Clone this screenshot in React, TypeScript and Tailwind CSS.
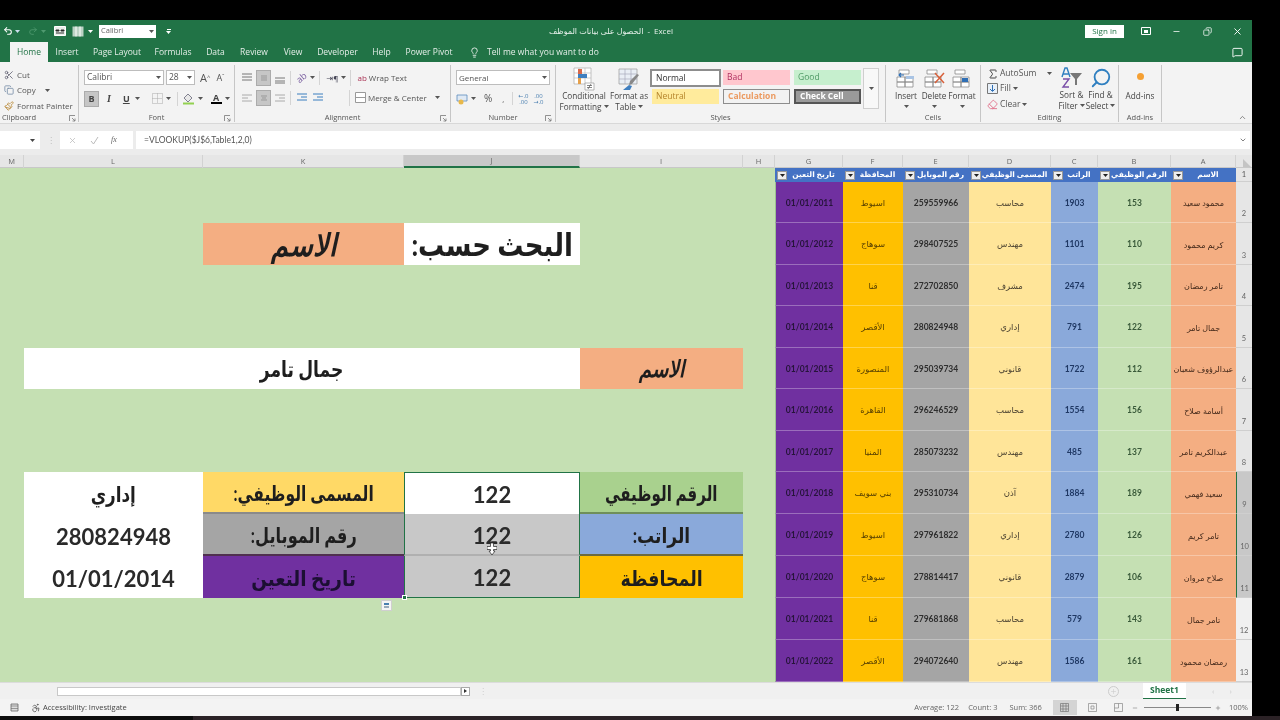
import React from "react";
import { Undo2, Redo2, Scissors, Copy, Paintbrush, Lightbulb, MessageSquare, X, Minus, ChevronUp, ChevronDown, Plus, Sigma, Eraser, Search, Accessibility } from "lucide-react";

const cols = "grid grid-cols-[24px_179px_201px_176px_163px_32px_68px_60px_66px_82px_47px_73px_65px_16px]";

const Caret = ({ c = "#555" }: { c?: string }) => (
  <svg width="5" height="3" viewBox="0 0 5 3" className="shrink-0"><path d="M0 0h5L2.500 3z" fill={c} /></svg>
);

const Launcher = () => (
  <svg width="7" height="7" viewBox="0 0 7 7" className="shrink-0"><path d="M.5 6V.5H6M3 3l3 3M6 3.500V6H3.500" fill="none" stroke="#777" strokeWidth=".8" /></svg>
);

const Lines = ({ ys, x1 = [1, 1, 1], x2 = [11, 11, 11], stroke = "#777" }: { ys: number[]; x1?: number[]; x2?: number[]; stroke?: string }) => (
  <svg width="12" height="12" viewBox="0 0 12 12" className="shrink-0">
    {ys.map((y, i) => <path key={i} d={`M${x1[i]} ${y}H${x2[i]}`} stroke={stroke} strokeWidth="1" />)}
  </svg>
);

const Pressed = ({ children }: { children: React.ReactNode }) => (
  <div className="w-[15px] h-[16px] bg-[#c6c6c6] border border-[#ababab] flex items-center justify-center">{children}</div>
);

const CellsIcon = ({ kind }: { kind: string }) => (
  <svg width="22" height="22" viewBox="0 0 22 22">
    <path d="M4 2h10v4H4zM2 9h8v5H2zM10 9h8v5h-8zM2 14h8v5H2zM10 14h8v5h-8z" fill="#fff" stroke="#8a8a8a" strokeWidth=".8" />
    {kind === "insert" && <path d="M9 7H4m2-2L4 7l2 2" fill="none" stroke="#2f6fb5" strokeWidth="1.200" />}
    {kind === "insert" && <path d="M11 8h8v3h-8z" fill="#a9c4e4" />}
    {kind === "delete" && <path d="M12 5l9 10M21 5l-9 10" stroke="#d8603a" strokeWidth="1.500" />}
    {kind === "format" && <path d="M11 10h6v4h-6z" fill="#2f6fb5" />}
  </svg>
);

const Big = ({ icon, lines, w }: { icon: React.ReactNode; lines: [string, string?]; w: string }) => (
  <div className={`${w} flex flex-col items-center shrink-0`}>
    <div className="h-[23px] flex items-center justify-center">{icon}</div>
    <div className="text-[8.200px] leading-[11px] text-[#444] whitespace-nowrap">{lines[0]}</div>
    <div className="text-[8.200px] leading-[11px] text-[#444] whitespace-nowrap flex items-center justify-center gap-[2px] h-[11px]">{lines[1]}<Caret /></div>
  </div>
);

const Group = ({ w, label, launcher, left, children }: { w: string; label: string; launcher?: boolean; left?: boolean; children: React.ReactNode }) => (
  <div className={`${w} shrink-0 flex flex-col border-r border-[#c6c6c6] mt-[3px] mb-px`}>
    <div className="h-[48px] flex shrink-0">{children}</div>
    <div className={`h-[10px] flex items-center px-[2px] text-[7.500px] text-[#555] ${left ? "justify-between" : "justify-center relative"}`}>
      <span>{label}</span>
      {launcher && <span className={left ? "" : "absolute right-[3px] top-[2px]"}><Launcher /></span>}
    </div>
  </div>
);

const tabs: [string, string][] = [
  ["Insert", "w-[38px]"], ["Page Layout", "w-[62px]"], ["Formulas", "w-[50px]"], ["Data", "w-[35px]"], ["Review", "w-[42px]"],
  ["View", "w-[36px]"], ["Developer", "w-[53px]"], ["Help", "w-[35px]"], ["Power Pivot", "w-[60px]"],
];

const styleBox = "h-[15px] flex items-center pl-[4px] text-[8.500px]";

const Ribbon = () => (
  <div className="h-[62px] bg-[#f3f3f3] flex shrink-0 border-b border-[#d8d8d8] text-[#444]">
    <Group w="w-[79px]" label="Clipboard" launcher left>
      <div className="flex flex-col pl-[4px] pt-[2px] text-[8px] text-[#555]">
        <div className="h-[15px] flex items-center gap-[3px]"><Scissors size={10} color="#667" />Cut</div>
        <div className="h-[16px] flex items-center gap-[3px]"><Copy size={10} color="#7a8fa8" />Copy<span className="ml-[6px]"><Caret /></span></div>
        <div className="h-[15px] flex items-center gap-[3px]"><Paintbrush size={10} color="#b98a3a" />Format Painter</div>
      </div>
    </Group>
    <Group w="w-[156px]" label="Font" launcher>
      <div className="flex flex-col pl-[5px] pt-[5px]">
        <div className="flex items-center h-[15px]">
          <div className="w-[80px] h-[15px] bg-white border border-[#bdbdbd] flex items-center justify-between px-[2px] text-[8.500px] text-[#555]">Calibri<Caret /></div>
          <div className="w-[29px] h-[15px] ml-[2px] bg-white border border-[#bdbdbd] flex items-center justify-between px-[2px] text-[8.500px] text-[#555]">28<Caret /></div>
          <span className="ml-[5px] text-[11px] text-[#555] leading-none">A<sup className="text-[6px]">^</sup></span>
          <span className="ml-[6px] text-[9px] text-[#555] leading-none">A<sup className="text-[6px]">ˇ</sup></span>
        </div>
        <div className="flex items-center h-[17px] mt-[5px] text-[9px] text-[#444]">
          <Pressed><b className="text-[9px]">B</b></Pressed>
          <i className="ml-[8px] font-['Liberation_Serif',serif] font-bold text-[10px]">I</i>
          <u className="ml-[12px] font-bold text-[9px]">U</u>
          <span className="ml-[5px]"><Caret /></span>
          <svg width="11" height="11" viewBox="0 0 11 11" className="ml-[12px]"><path d="M.5.500h10v10H.5zM5.500.5v10M.5 5.500h10" fill="none" stroke="#aaa" strokeDasharray="1 1" /></svg>
          <span className="ml-[3px]"><Caret /></span>
          <div className="w-px h-[14px] bg-[#d4d4d4] ml-[6px]" />
          <svg width="13" height="13" viewBox="0 0 13 13" className="ml-[4px]"><path d="M2 6l4-4 4 4-4 4z" fill="#e8e8e8" stroke="#667" strokeWidth=".8" /><path d="M1 11.500h11" stroke="#92d050" strokeWidth="2" /></svg>
          <span className="ml-[3px]"><Caret /></span>
          <span className="ml-[8px] flex flex-col items-center leading-[9px] font-bold text-[9px]">A<span className="w-[11px] h-[2px] bg-black" /></span>
          <span className="ml-[3px]"><Caret /></span>
        </div>
      </div>
    </Group>
    <Group w="w-[216px]" label="Alignment" launcher>
      <div className="flex flex-col pl-[6px] pt-[4px]">
        <div className="flex items-center h-[17px]">
          <Lines ys={[2, 5, 8]} />
          <div className="ml-[3px]"><Pressed><Lines ys={[4, 6, 8]} x1={[3, 3, 3]} x2={[9, 9, 9]} stroke="#999" /></Pressed></div>
          <div className="ml-[3px]"><Lines ys={[6, 9, 11]} /></div>
          <div className="w-px h-[14px] bg-[#d4d4d4] ml-[4px]" />
          <span className="ml-[5px] text-[9px] text-[#7a5fa0] rotate-[-40deg] leading-none">ab</span>
          <span className="ml-[3px]"><Caret /></span>
          <div className="w-px h-[14px] bg-[#d4d4d4] ml-[4px]" />
          <span className="ml-[7px] text-[8px] text-[#445]">⇥¶</span>
          <span className="ml-[3px]"><Caret /></span>
          <div className="w-px h-[16px] bg-[#d4d4d4] ml-[4px]" />
          <span className="ml-[6px] text-[8px] text-[#a35]">ab</span>
          <span className="ml-[2px] text-[8px] text-[#555]">Wrap Text</span>
        </div>
        <div className="flex items-center h-[17px] mt-[3px]">
          <Lines ys={[3, 6, 9]} x2={[11, 7, 11]} stroke="#aaa" />
          <div className="ml-[3px]"><Pressed><Lines ys={[4, 6, 8]} x1={[3, 4, 3]} x2={[9, 8, 9]} stroke="#999" /></Pressed></div>
          <div className="ml-[3px]"><Lines ys={[3, 6, 9]} x1={[1, 5, 1]} stroke="#aaa" /></div>
          <div className="w-px h-[14px] bg-[#d4d4d4] ml-[4px]" />
          <div className="ml-[5px]"><Lines ys={[2, 5, 8]} x1={[1, 5, 1]} stroke="#3a7fbf" /></div>
          <div className="ml-[4px]"><Lines ys={[2, 5, 8]} x1={[1, 5, 1]} stroke="#3a7fbf" /></div>
          <div className="w-px h-[16px] bg-[#d4d4d4] ml-[25px]" />
          <svg width="11" height="11" viewBox="0 0 11 11" className="ml-[5px]"><path d="M.5.500h10v10H.5zM.5 5.500h10" fill="#fff" stroke="#999" /></svg>
          <span className="ml-[2px] text-[8px] text-[#555] whitespace-nowrap">Merge &amp; Center</span>
          <span className="ml-[8px]"><Caret /></span>
        </div>
      </div>
    </Group>
    <Group w="w-[105px]" label="Number" launcher>
      <div className="flex flex-col pl-[5px] pt-[5px]">
        <div className="w-[94px] h-[15px] bg-white border border-[#bdbdbd] flex items-center justify-between px-[2px] text-[8px] text-[#555]">General<Caret /></div>
        <div className="flex items-center h-[17px] mt-[5px] text-[10px] text-[#555]">
          <svg width="12" height="12" viewBox="0 0 12 12"><path d="M1 2h10v6H1z" fill="#dfe9f4" stroke="#5b8bbd" strokeWidth=".8" /><circle cx="5" cy="9" r="2.500" fill="#e8b84a" /></svg>
          <span className="ml-[3px]"><Caret /></span>
          <span className="ml-[8px]">%</span>
          <span className="ml-[10px] text-[8px]">,</span>
          <div className="w-px h-[13px] bg-[#d4d4d4] ml-[8px]" />
          <span className="ml-[5px] text-[6px] leading-[6px] text-center text-[#4a7fb0]">←.0<br />.00</span>
          <span className="ml-[5px] text-[6px] leading-[6px] text-center text-[#4a7fb0]">.00<br />→.0</span>
        </div>
      </div>
    </Group>
    <Group w="w-[330px]" label="Styles">
      <div className="flex pl-[3px] pt-[2px]">
        <Big w="w-[50px]" lines={["Conditional", "Formatting"]} icon={
          <svg width="24" height="24" viewBox="0 0 24 24"><path d="M2 1h17v16H2z" fill="#fff" stroke="#aaa" strokeWidth=".7" /><path d="M2 6h17M2 11h17M7 1v16M13 1v16" stroke="#bbb" strokeWidth=".7" /><path d="M6 2h4v5H6z" fill="#d9694a" /><path d="M6 7h9v4H6z" fill="#3f7fc0" /><path d="M6 11h3v6H6z" fill="#e6a04a" /><path d="M13 16h9v7h-9z" fill="#fff" stroke="#999" strokeWidth=".7" /><path d="M15 18.500h5M15 20.500h5M19 17l-3 5" stroke="#555" strokeWidth=".7" /></svg>
        } />
        <Big w="w-[40px]" lines={["Format as", "Table"]} icon={
          <svg width="24" height="24" viewBox="0 0 24 24"><path d="M2 2h18v15H2z" fill="#e9eef5" stroke="#999" strokeWidth=".7" /><path d="M2 7h18M2 12h18M8 2v15M14 2v15" stroke="#aab" strokeWidth=".7" /><path d="M22 8l-7 9-3 1 1-4 7-7z" fill="#888" /><path d="M6 23l6-5 3 1-2 4z" fill="#3f7fc0" /></svg>
        } />
        <div className="flex flex-col gap-[3px] pt-[2px] ml-px">
          <div className="flex gap-[2px] h-[17px]">
            <div className={`w-[71px] ${styleBox} !h-[18px] bg-white border-2 border-[#8d8d8d] text-[#333]`}>Normal</div>
            <div className={`w-[67px] ${styleBox} mt-px bg-[#ffc7ce] text-[#b03060]`}>Bad</div>
            <div className={`w-[67px] ${styleBox} mt-px ml-[2px] bg-[#c6efce] text-[#4f9a65]`}>Good</div>
          </div>
          <div className="flex gap-[2px]">
            <div className={`w-[67px] ${styleBox} ml-[2px] bg-[#ffeb9c] text-[#b5842a]`}>Neutral</div>
            <div className={`w-[67px] ${styleBox} ml-[2px] bg-[#f2f2f2] border border-[#8d8d8d] text-[#eb9a60] font-bold`}>Calculation</div>
            <div className={`w-[67px] ${styleBox} ml-[2px] bg-[#9a9a9a] border-2 border-[#555] text-white font-bold`}>Check Cell</div>
          </div>
        </div>
        <div className="w-[16px] h-[41px] ml-[2px] mt-[1px] bg-[#f8f8f8] border border-[#cfcfcf] flex items-center justify-center"><Caret /></div>
      </div>
    </Group>
    <Group w="w-[95px]" label="Cells">
      <div className="flex pl-[6px] pt-[2px]">
        <Big w="w-[28px]" lines={["Insert", ""]} icon={<CellsIcon kind="insert" />} />
        <Big w="w-[28px]" lines={["Delete", ""]} icon={<CellsIcon kind="delete" />} />
        <Big w="w-[28px]" lines={["Format", ""]} icon={<CellsIcon kind="format" />} />
      </div>
    </Group>
    <Group w="w-[138px]" label="Editing">
      <div className="flex pl-[6px] pt-[1px]">
        <div className="flex flex-col text-[8.500px] text-[#555] w-[70px]">
          <div className="h-[15px] flex items-center gap-[1px]"><Sigma size={12} color="#444" />AutoSum<span className="ml-[10px]"><Caret /></span></div>
          <div className="h-[15px] flex items-center gap-[2px]"><svg width="11" height="11" viewBox="0 0 11 11"><path d="M.5.500h10v10H.5z" fill="#e8f0f8" stroke="#777" /><path d="M5.500 2v6M3 6l2.500 2.500L8 6" fill="none" stroke="#2f6fb5" /></svg>Fill<Caret /></div>
          <div className="h-[16px] flex items-center gap-[2px]"><Eraser size={11} color="#e0708a" />Clear<Caret /></div>
        </div>
        <Big w="w-[29px]" lines={["Sort &", "Filter"]} icon={
          <svg width="24" height="24" viewBox="0 0 24 24"><path d="M2 11l3-9h2l3 9M3.500 8h5" fill="none" stroke="#2f7fc0" strokeWidth="1.400" /><path d="M3 13h6l-6 8h6" fill="none" stroke="#7a4fa8" strokeWidth="1.400" /><path d="M10 7h12l-5 6v6h-2v-6z" fill="#777" /></svg>
        } />
        <Big w="w-[29px]" lines={["Find &", "Select"]} icon={<Search size={22} color="#2f7fc0" strokeWidth={2} className="-scale-x-100" />} />
      </div>
    </Group>
    <Group w="w-[43px]" label="Add-ins">
      <div className="flex flex-col items-center w-full text-[8.200px] text-[#444]">
        <div className="h-[23px] flex items-center"><span className="w-[7px] h-[7px] rounded-full bg-[#f5a033]" /></div>
        <span className="mt-[2px] leading-[11px]">Add-ins</span>
      </div>
    </Group>
    <div className="flex-1 flex items-end justify-end pr-[5px] pb-[1px]"><ChevronUp size={9} color="#666" /></div>
  </div>
);

const Filter = () => (
  <span className="w-[10px] h-[9px] bg-[#eeeeee] border border-[#999] flex items-center justify-center shrink-0"><Caret c="#222" /></span>
);

const headers = ["تاريخ التعين", "المحافظة", "رقم الموبايل", "المسمى الوظيفي", "الراتب", "الرقم الوظيفي", "الاسم"];

const rowsData: string[][] = [
  ["محمود سعيد", "153", "1903", "محاسب", "259559966", "اسيوط", "01/01/2011"],
  ["كريم محمود", "110", "1101", "مهندس", "298407525", "سوهاج", "01/01/2012"],
  ["تامر رمضان", "195", "2474", "مشرف", "272702850", "قنا", "01/01/2013"],
  ["جمال تامر", "122", "791", "إداري", "280824948", "الأقصر", "01/01/2014"],
  ["عبدالرؤوف شعبان", "112", "1722", "قانوني", "295039734", "المنصورة", "01/01/2015"],
  ["أسامة صلاح", "156", "1554", "محاسب", "296246529", "القاهرة", "01/01/2016"],
  ["عبدالكريم تامر", "137", "485", "مهندس", "285073232", "المنيا", "01/01/2017"],
  ["سعيد فهمي", "189", "1884", "آذن", "295310734", "بني سويف", "01/01/2018"],
  ["تامر كريم", "126", "2780", "إداري", "297961822", "اسيوط", "01/01/2019"],
  ["صلاح مروان", "106", "2879", "قانوني", "278814417", "سوهاج", "01/01/2020"],
  ["تامر جمال", "143", "579", "محاسب", "279681868", "قنا", "01/01/2021"],
  ["رمضان محمود", "161", "1586", "مهندس", "294072640", "الأقصر", "01/01/2022"],
];

const rowHeights = ["h-[41px]", "h-[42px]", "h-[41px]", "h-[42px]", "h-[41px]", "h-[42px]", "h-[41px]", "h-[42px]", "h-[42px]", "h-[42px]", "h-[42px]", "h-[42px]"];

const big = "flex items-center justify-center text-[#1e1e1e] font-bold";
const num = `${big} text-[22px] text-[#2a2a2a] pt-[2px]`;

const Ar = ({ text, cls }: { text: string; cls: string }) => (
  <span dir="rtl" className={`inline-block whitespace-nowrap leading-none ${cls}`}>{text}</span>
);

const LeftCells = ({ row }: { row: number }) => {
  if (row === 3)
    return (
      <>
        <div className="col-span-2" />
        <div className={`${big} bg-[#f4ae82]`}><Ar text="الاسم" cls="text-[31px] scale-x-[.88] italic" /></div>
        <div className={`${big} bg-white`}><Ar text="البحث حسب:" cls="text-[31px] scale-x-[.84]" /></div>
        <div className="col-span-2" />
      </>
    );
  if (row === 6)
    return (
      <>
        <div />
        <div className={`${big} col-span-3 bg-white`}><Ar text="جمال تامر" cls="text-[22px] scale-x-[.78]" /></div>
        <div className={`${big} bg-[#f4ae82]`}><Ar text="الاسم" cls="text-[23px] scale-x-[.85] italic" /></div>
        <div />
      </>
    );
  if (row === 9)
    return (
      <>
        <div />
        <div className={`${big} bg-white`}><Ar text="إداري" cls="text-[21px] scale-x-[.8]" /></div>
        <div className={`${big} bg-[#ffd966] border-b-2 border-[#8a8a8a]`}><Ar text="المسمى الوظيفي:" cls="text-[21px] scale-x-[.74]" /></div>
        <div className={`${num} bg-white border-x border-t border-[#217346]`}>122</div>
        <div className={`${big} bg-[#a9d18e] border-b-2 border-[#6f8f5a]`}><Ar text="الرقم الوظيفي" cls="text-[21px] scale-x-[.72]" /></div>
        <div />
      </>
    );
  if (row === 10)
    return (
      <>
        <div />
        <div className={`${num} bg-white`}>280824948</div>
        <div className={`${big} bg-[#a5a5a5] border-b-2 border-[#50304f]`}><Ar text="رقم الموبايل:" cls="text-[21px] scale-x-[.77]" /></div>
        <div className={`${num} bg-[#c8c8c8] border-x border-[#217346] border-b-2 border-b-[#b0b0b0] relative`}>
          122
          <svg width="10" height="12" viewBox="0 0 10 12" className="absolute left-[82px] top-[29px]"><path d="M3.500 0h3v3.500H10v3H6.500V8L8 8 5 12 2 8h1.500V6.500H0v-3h3.500z" fill="#fff" stroke="#222" strokeWidth=".7" /></svg>
        </div>
        <div className={`${big} bg-[#8aa9da] border-b-2 border-[#6c6a40]`}><Ar text="الراتب:" cls="text-[21px] scale-x-[.81]" /></div>
        <div />
      </>
    );
  if (row === 11)
    return (
      <>
        <div />
        <div className={`${num} bg-white`}>01/01/2014</div>
        <div className={`${big} bg-[#7030a0] !text-[#1c0f33]`}><Ar text="تاريخ التعين" cls="text-[21px] scale-x-[.88]" /></div>
        <div className={`${num} bg-[#c8c8c8] border-x border-b border-[#217346] relative`}>
          122
          <span className="absolute -left-[3px] -bottom-[3px] w-[5px] h-[5px] bg-[#217346] border border-white" />
        </div>
        <div className={`${big} bg-[#ffc000]`}><Ar text="المحافظة" cls="text-[21px] scale-x-[.83]" /></div>
        <div />
      </>
    );
  return <div className="col-span-6" />;
};

const dataCell = "flex items-center justify-center text-[8.500px] text-[#333] border-b border-white/30 whitespace-nowrap pt-[2px]";

const Sheet = () => (
  <div className="h-[514px] bg-[#c5e0b3] relative shrink-0 font-['Lato','DejaVu_Sans',sans-serif] overflow-hidden">
    <div className={`${cols} h-[14px]`}>
      <div className="col-span-6" />
      {headers.map((h) => (
        <div key={h} className="bg-[#4472c4] flex items-center justify-between pl-[2px] pr-[3px] text-[7.500px] font-bold text-white whitespace-nowrap">
          <Filter />
          <span className="flex-1 text-center">{h}</span>
        </div>
      ))}
      <div className="bg-[#e6e6e6] flex items-center justify-center text-[7.500px] text-[#555] border-b border-[#cfcfcf]">1</div>
    </div>
    {rowsData.map((r, i) => {
      const row = i + 2;
      const sel = row >= 9 && row <= 11;
      return (
        <div key={row} className={`${cols} ${rowHeights[i]}`}>
          <LeftCells row={row} />
          <div className={`${dataCell} bg-[#7030a0] !text-[#26143a] font-bold border-l border-l-[#9bc28f]`}>{r[6]}</div>
          <div className={`${dataCell} bg-[#ffc000] !text-[#5a4200]`}>{r[5]}</div>
          <div className={`${dataCell} bg-[#a5a5a5] font-bold !text-[#2e2e2e]`}>{r[4]}</div>
          <div className={`${dataCell} bg-[#ffe599] !text-[#4a4130]`}>{r[3]}</div>
          <div className={`${dataCell} bg-[#8aa9da] font-bold !text-[#1f3864]`}>{r[2]}</div>
          <div className={`${dataCell} bg-[#c5e0b3] font-bold !text-[#3a5a3a]`}>{r[1]}</div>
          <div className={`${dataCell} bg-[#f4ae82] !text-[#43291a] !text-[8px]`}>{r[0]}</div>
          <div className={`flex items-end justify-center pb-[3px] text-[7.500px] text-[#666] border-b border-[#cfcfcf] ${sel ? "bg-[#c8c8c8] border-l border-l-[#217346]" : row >= 12 ? "bg-[#f0f0f0]" : "bg-[#e6e6e6]"}`}>{row}</div>
        </div>
      );
    })}
    <div className="absolute left-[381px] top-[432px] w-[11px] h-[11px] bg-[#f4f4f4] border border-[#cfcfcf] flex flex-col items-center justify-center gap-px">
      <span className="w-[5px] h-[2px] bg-[#4a7fb0]" />
      <span className="w-[5px] h-[2px] bg-[#9ab]" />
    </div>
  </div>
);

const letters = ["M", "L", "K", "J", "I", "H", "G", "F", "E", "D", "C", "B", "A"];

export default function App() {
  return (
    <div className="w-[1280px] h-[720px] bg-black overflow-hidden flex flex-col pt-[20px] font-['Open_Sans','DejaVu_Sans',sans-serif] blur-[0.4px]">
      <div className="w-[1252px] flex flex-col">
        {/* Title bar */}
        <div className="h-[22px] bg-[#217346] flex items-center text-white shrink-0">
          <div className="w-[549px] shrink-0 flex items-center">
            <Undo2 size={10} strokeWidth={2.500} className="ml-[3px]" />
            <span className="ml-[2px]"><Caret c="#cde" /></span>
            <Redo2 size={10} color="#4f9a70" className="ml-[8px]" />
            <span className="ml-[3px]"><Caret c="#4f9a70" /></span>
            <svg width="12" height="10" viewBox="0 0 12 10" className="ml-[8px]"><path d="M.5.500h11v9H.5z" fill="#e8eeea" stroke="#fff" /><path d="M2 4h3v1H2zM7 4h3v1H7zM2 7h8" stroke="#333" /></svg>
            <svg width="12" height="11" viewBox="0 0 12 11" className="ml-[6px]"><path d="M.5.500h11v10H.5z" fill="#bcd3c5" /><path d="M4 .5v10M8 .5v10" stroke="#fff" /></svg>
            <span className="ml-[4px]"><Caret c="#fff" /></span>
            <div className="w-[57px] h-[13px] ml-[6px] bg-white flex items-center justify-between px-[2px] text-[7.500px] text-[#666]">Calibri<Caret /></div>
            <span className="ml-[10px] flex flex-col items-center gap-px"><span className="w-[4px] h-px bg-white" /><Caret c="#fff" /></span>
          </div>
          <div className="text-[8px] text-[#e6f0ea] whitespace-nowrap flex gap-[4px]"><span dir="rtl">الحصول على بيانات الموظف</span><span>-</span><span>Excel</span></div>
          <div className="ml-auto flex items-center">
            <div className="w-[39px] h-[13px] bg-white flex items-center justify-center text-[8px] text-[#217346]">Sign in</div>
            <svg width="10" height="8" viewBox="0 0 10 8" className="ml-[17px]"><path d="M.5.500h9v7h-9z" fill="none" stroke="#fff" /><path d="M3 3h4v3H3z" fill="#fff" /></svg>
            <Minus size={9} className="ml-[21px]" />
            <Copy size={9} className="ml-[22px] -scale-x-100" />
            <X size={11} className="ml-[20px] mr-[9px]" />
          </div>
        </div>
        {/* Tabs */}
        <div className="h-[20px] bg-[#217346] flex items-end text-[8.500px] text-[#e4eee8] shrink-0 pl-[10px] relative">
          <div className="w-[38px] h-[20px] bg-[#f3f3f3] text-[#217346] flex items-center justify-center">Home</div>
          {tabs.map(([t, w]) => (
            <div key={t} className={`${w} h-[20px] flex items-center justify-center whitespace-nowrap`}>{t}</div>
          ))}
          <div className="h-[20px] flex items-center ml-[10px]">
            <Lightbulb size={11} color="#e8f0ea" />
            <span className="ml-[7px]">Tell me what you want to do</span>
          </div>
          <div className="ml-auto h-[20px] flex items-center mr-[9px]"><MessageSquare size={11} color="#fff" /></div>
        </div>
        <Ribbon />
        {/* Formula bar */}
        <div className="h-[31px] bg-[#ececec] flex items-center shrink-0 pt-[1px]">
          <div className="w-[40px] h-[18px] bg-white flex items-center justify-end pr-[5px]"><Caret c="#444" /></div>
          <span className="ml-[7px] text-[8px] text-[#bbb] leading-none">⋮</span>
          <div className="w-[73px] h-[18px] ml-[5px] bg-white flex items-center text-[#bbb]">
            <X size={9} className="ml-[8px]" />
            <svg width="9" height="9" viewBox="0 0 9 9" className="ml-[13px]"><path d="M1 5l2.500 3L8 1" fill="none" stroke="#bbb" /></svg>
            <i className="ml-[12px] text-[8px] text-[#666] font-['Liberation_Serif',serif]">fx</i>
          </div>
          <div className="w-[1114px] h-[18px] ml-[3px] bg-white flex items-center justify-between pl-[8px] pr-[3px] text-[8.500px] text-[#555] font-['Lato',sans-serif]">
            <span>=VLOOKUP($J$6,Table1,2,0)</span>
            <ChevronDown size={8} color="#444" />
          </div>
        </div>
        {/* Column headers */}
        <div className={`${cols} h-[13px] bg-[#e6e6e6] border-b border-[#c8c8c8] shrink-0`}>
          {letters.map((l) => (
            <div key={l} className={`flex items-center justify-center text-[7.500px] text-[#666] border-r border-[#d2d2d2] ${l === "J" ? "bg-[#c8c8c8] border-b-2 border-b-[#217346]" : ""}`}>{l}</div>
          ))}
          <div className="flex items-end justify-end pr-px pb-px"><svg width="8" height="8" viewBox="0 0 8 8"><path d="M0 0l8 8H0z" fill="#c4c4c4" /></svg></div>
        </div>
        <Sheet />
        {/* Sheet tabs */}
        <div className="h-[17px] bg-[#f0f0f0] flex items-center shrink-0 border-t border-[#dcdcdc]">
          <div className="w-[404px] h-[9px] ml-[57px] bg-white border border-[#c8c8c8]" />
          <div className="w-[9px] h-[9px] bg-white border border-[#aaa] flex items-center justify-center"><span className="w-0 h-0 border-y-[2px] border-y-transparent border-l-[3px] border-l-[#333]" /></div>
          <span className="ml-[9px] text-[8px] text-[#ccc] leading-none">⋮</span>
          <span className="ml-[621px] w-[11px] h-[11px] rounded-full border border-[#ccc] flex items-center justify-center"><Plus size={7} color="#ccc" /></span>
          <div className="ml-[24px] w-[43px] h-[17px] bg-white border-b-2 border-[#217346] flex items-center justify-center text-[8.500px] font-bold text-[#217346]">Sheet1</div>
          <span className="ml-[26px] text-[8px] text-[#ccc]">‹</span>
          <span className="ml-[15px] text-[8px] text-[#ccc]">›</span>
        </div>
        {/* Status bar */}
        <div className="h-[17px] bg-[#f3f3f3] flex items-center shrink-0 text-[7.500px] text-[#666] whitespace-nowrap">
          <svg width="9" height="9" viewBox="0 0 9 9" className="ml-[10px]"><path d="M1 1h7v7H1z" fill="#ddd" stroke="#666" strokeWidth=".8" /><path d="M1 3h7M1 5.500h7" stroke="#666" strokeWidth=".6" /></svg>
          <Accessibility size={10} color="#555" className="ml-[12px]" />
          <span className="ml-[2px] text-[#444]">Accessibility: Investigate</span>
          <div className="ml-auto flex items-center">
            <span>Average: 122</span>
            <span className="ml-[9px]">Count: 3</span>
            <span className="ml-[12px]">Sum: 366</span>
            <div className="ml-[11px] w-[24px] h-[15px] bg-[#d4d4d4] flex items-center justify-center"><svg width="9" height="9" viewBox="0 0 9 9"><path d="M.5.500h8v8h-8zM3 .5v8M6 .5v8M.5 3h8M.5 6h8" fill="none" stroke="#777" strokeWidth=".7" /></svg></div>
            <svg width="9" height="9" viewBox="0 0 9 9" className="ml-[11px]"><path d="M.5.500h8v8h-8zM3 3h3v3H3z" fill="none" stroke="#888" strokeWidth=".7" /></svg>
            <svg width="9" height="9" viewBox="0 0 9 9" className="ml-[17px]"><path d="M.5.500h8v8h-8zM.5 5h4V.5" fill="none" stroke="#888" strokeWidth=".7" /></svg>
            <Minus size={6} className="ml-[9px]" />
            <div className="ml-[6px] w-[67px] h-px bg-[#888] relative"><span className="absolute left-[32px] -top-[3px] w-[3px] h-[7px] bg-[#222]" /></div>
            <Plus size={6} className="ml-[4px]" />
            <span className="ml-[8px] mr-[4px]">100%</span>
          </div>
        </div>
      </div>
      <div className="h-[4px] flex shrink-0">
        <div className="w-[193px] bg-[#0c0c0c]" />
        <div className="flex-1 bg-[#2b2226]" />
      </div>
    </div>
  );
}
